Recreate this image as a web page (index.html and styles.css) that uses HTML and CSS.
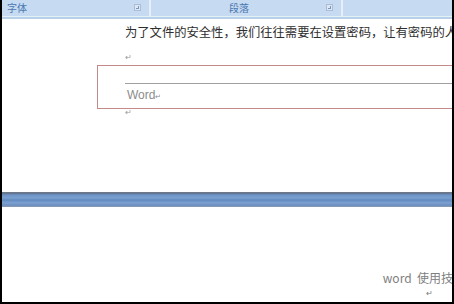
FILE: index.html
```html
<!DOCTYPE html>
<html lang="zh">
<head>
    <meta charset="UTF-8">
    <title>Word</title>
    <link rel="stylesheet" href="styles.css">
</head>
<body>
<div class="frame">
    <div class="ribbon">
        <div class="group g-font"><span>字体</span><i class="launcher"></i></div>
        <div class="group g-para"><span>段落</span><i class="launcher"></i></div>
        <div class="group g-rest"></div>
    </div>
    <div class="ribbon-edge"></div>

    <div class="page top-page">
        <p class="line text">为了文件的安全性，我们往往需要在设置密码，让有密码的人才能打开</p>
        <p class="line mark">↵</p>
        <div class="header-box">
            <div class="rule"></div>
            <p class="word">Word<small>↵</small></p>
        </div>
        <p class="line mark after">↵</p>
    </div>

    <div class="page-gap"></div>

    <div class="page bottom-page">
        <p class="footer-text">word&nbsp; 使用技巧</p>
        <p class="footer-mark">↵</p>
    </div>
</div>
</body>
</html>
```

FILE: styles.css
```css
body {
    margin: 0;
    background: #000;
    font-family: "Noto Sans CJK SC", "Liberation Sans", sans-serif;
    overflow: hidden;
}
.frame {
    width: 450px;
    height: 302px;
    margin-left: 2px;
    background: #fff;
    overflow: hidden;
}
.ribbon {
    display: flex;
    height: 16px;
    background: #c6daf1;
}
.group {
    position: relative;
    box-sizing: border-box;
    border-right: 2px solid #e6eef8;
    font-size: 10px;
    line-height: 16px;
    color: #4a78b0;
}
.g-font {
    width: 149px;
    padding-left: 5px;
}
.g-para {
    width: 192px;
    padding-left: 78px;
}
.g-rest {
    flex: 1;
    border-right: none;
}
.launcher {
    position: absolute;
    right: 8px;
    top: 4px;
    width: 5px;
    height: 5px;
    border: 1px solid #a9bdd6;
    background: #dde7f3;
}
.launcher::after {
    content: "";
    position: absolute;
    left: 1px;
    top: 1px;
    width: 3px;
    height: 3px;
    border-right: 1px solid #7d96b8;
    border-bottom: 1px solid #7d96b8;
    box-sizing: border-box;
}
.ribbon-edge {
    height: 2px;
    border-top: 1px solid #e2f1f6;
    background: #b9d0ea;
}
.page {
    padding-left: 123px;
    white-space: nowrap;
}
.line {
    margin: 0;
}
.text {
    margin-top: 4px;
    font-size: 12.3px;
    line-height: 18px;
    color: #2e2e2e;
}
.mark {
    margin-top: 11px;
    font-size: 8px;
    line-height: 10px;
    color: #999;
}
.header-box {
    margin: 3px 0 0 -28px;
    height: 42px;
    border: 1px solid #c4898a;
    border-right: none;
    padding-left: 27px;
}
.rule {
    margin-top: 17px;
    border-top: 1px solid #a0a0a0;
}
.word {
    margin: 4px 0 0 2px;
    font-family: "Liberation Sans", sans-serif;
    font-size: 12px;
    line-height: 14px;
    color: #8c8c8c;
}
.word small {
    font-size: 7px;
}
.after {
    margin-top: -2px;
}
.page-gap {
    margin-top: 75px;
    height: 15px;
    background: linear-gradient(#7d7f83 0, #5f6f88 1px, #6e93c6 3px, #7aa0d0 6px, #628ac0 8px, #7ea3d2 11px, #6b8ec0 13px, #8a9cb4 15px);
}
.bottom-page {
    padding-left: 0;
    text-align: right;
}
.footer-text {
    margin: 63px -13px 0 0;
    font-size: 12px;
    line-height: 16px;
    color: #808080;
}
.footer-mark {
    margin: 2px 0 0 0;
    padding-right: 19px;
    font-size: 8px;
    line-height: 10px;
    color: #777;
}
```
